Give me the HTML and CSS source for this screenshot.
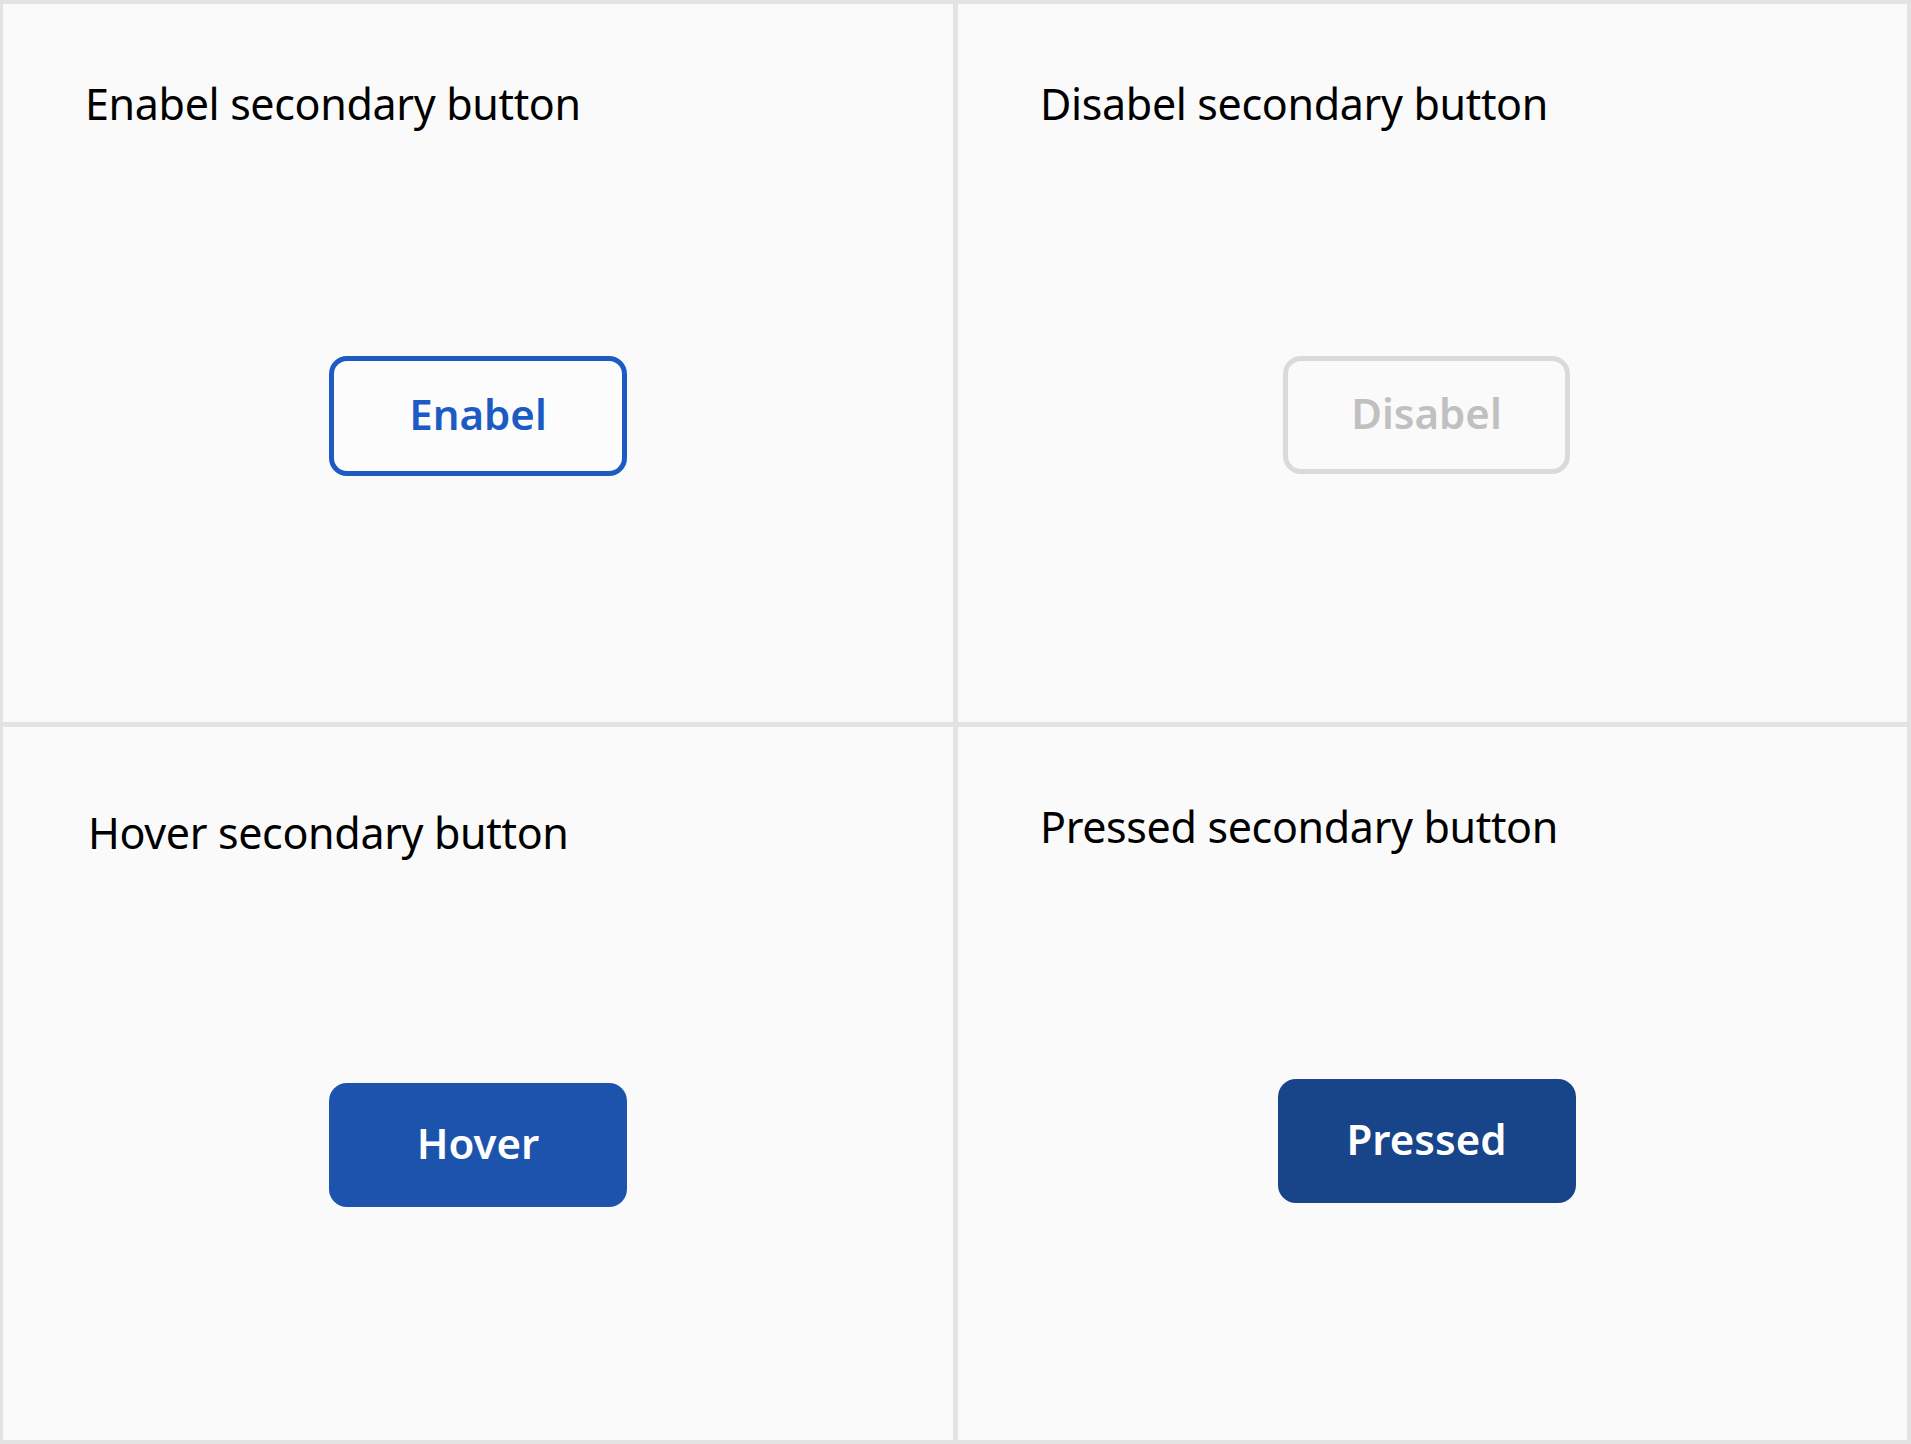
FILE: index.html
```html
<!DOCTYPE html>
<html lang="en">
<head>
<meta charset="utf-8">
<title>Secondary buttons</title>
<link rel="stylesheet" href="styles.css">
</head>
<body>
<main class="board">
  <section class="cell">
    <h2 class="title">Enabel secondary button</h2>
    <div class="stage">
      <button class="btn btn-enabled">Enabel</button>
    </div>
  </section>
  <section class="cell cell-right">
    <h2 class="title">Disabel secondary button</h2>
    <div class="stage">
      <button class="btn btn-disabled" disabled>Disabel</button>
    </div>
  </section>
  <section class="cell">
    <h2 class="title title-low title-shift">Hover secondary button</h2>
    <div class="stage stage-low">
      <button class="btn btn-hover">Hover</button>
    </div>
  </section>
  <section class="cell cell-right">
    <h2 class="title">Pressed secondary button</h2>
    <div class="stage">
      <button class="btn btn-pressed">Pressed</button>
    </div>
  </section>
</main>
</body>
</html>
```

FILE: styles.css
```css
html, body {
  margin: 0;
  padding: 0;
  background: #e3e3e3;
}

body {
  font-family: "Noto Sans", "Open Sans", sans-serif;
  width: 1911px;
  height: 1444px;
}

.board {
  box-sizing: border-box;
  width: 1911px;
  height: 1444px;
  padding: 4px 4px 4px 3px;
  display: grid;
  grid-template-columns: 950px 949px;
  grid-template-rows: 718px 713px;
  column-gap: 5px;
  row-gap: 5px;
  background: #e3e3e3;
}

.cell {
  background: #fafafa;
  display: flex;
  flex-direction: column;
  padding-left: 82px;
  padding-right: 0;
}

.cell-right {
  padding-right: 12px;
}

.title {
  margin: 78px 0 0 0;
  font-size: 43px;
  line-height: 43px;
  font-weight: 400;
  color: #000;
  letter-spacing: -0.35px;
}

.title-low {
  margin-top: 84px;
}

.title-shift {
  margin-left: 3px;
}

.stage {
  margin-left: -82px;
  margin-top: 231px;
  display: flex;
  justify-content: center;
}

.stage-low {
  margin-top: 229px;
}

.btn {
  box-sizing: border-box;
  width: 298px;
  height: 120px;
  border-radius: 18px;
  font-family: "Noto Sans", "Open Sans", sans-serif;
  font-size: 42px;
  font-weight: 600;
  display: flex;
  align-items: center;
  justify-content: center;
  padding: 0 0 6px 0;
  cursor: pointer;
}

.btn-enabled {
  background: #fcfcfd;
  border: 5px solid #1d5bc4;
  color: #1d5bc4;
}

.btn-disabled {
  width: 287px;
  height: 118px;
  background: #fafafa;
  border: 5px solid #dadada;
  color: #c0c0c0;
  cursor: default;
}

.btn-hover {
  height: 124px;
  background: #1c53ad;
  border: none;
  color: #ffffff;
}

.btn-pressed {
  height: 124px;
  background: #18448a;
  border: none;
  color: #ffffff;
}
```
